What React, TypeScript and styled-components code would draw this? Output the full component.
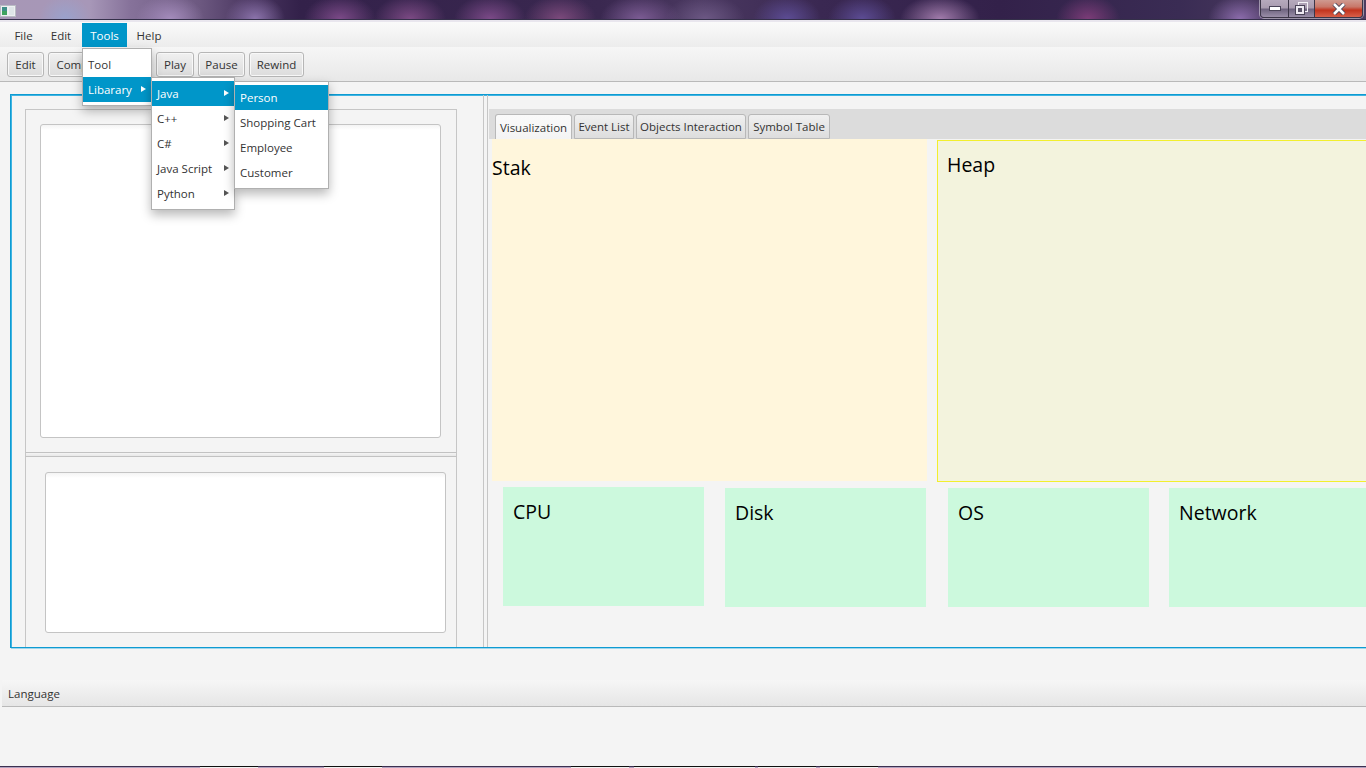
import { FC } from "react"
import styled, { createGlobalStyle } from "styled-components"

const GlobalStyle = createGlobalStyle`
	html, body {
		margin: 0;
		padding: 0;
		width: 1366px;
		height: 768px;
		overflow: hidden;
		background: #f4f4f4;
	}
	* {
		box-sizing: border-box;
	}
`

const menus = [
	{ label: "File", width: 33 },
	{ label: "Edit", width: 36 },
	{ label: "Tools", width: 45, active: true },
	{ label: "Help", width: 38 },
]

const tools = [
	{ label: "Edit", width: 37 },
	{ label: "Compile", width: 61 },
	{ label: "Run", width: 39 },
	{ label: "Play", width: 38 },
	{ label: "Pause", width: 47 },
	{ label: "Rewind", width: 55 },
]

const tabs = [
	{ label: "Visualization", width: 77, active: true },
	{ label: "Event List", width: 60 },
	{ label: "Objects Interaction", width: 110 },
	{ label: "Symbol Table", width: 82 },
]

const devices = [
	{ label: "CPU", raised: true },
	{ label: "Disk" },
	{ label: "OS" },
	{ label: "Network" },
]

// windows behind the app, they peek out under the bottom edge
const taskbar = [
	{ width: 200 },
	{ width: 58, light: true },
	{ width: 66 },
	{ width: 58, light: true },
	{ width: 189 },
	{ width: 58, light: true },
	{ width: 5 },
	{ width: 62, light: true },
	{ width: 59, light: true },
	{ width: 3 },
	{ width: 58, light: true },
	{ width: 4 },
	{ width: 58, light: true },
	{ width: 473 },
	{ width: 15 },
]

// blurred wallpaper spots seen through the glass title bar
const blobs = [
	[65, 26, "#9aa2cc"],
	[170, 34, "#a48cbc"],
	[255, 30, "#8c74ac"],
	[340, 36, "#7c4a88"],
	[410, 36, "#7c4a84"],
	[490, 36, "#7c4a88"],
	[560, 36, "#7c4a7c"],
	[640, 40, "#7c5c94"],
	[705, 40, "#6c5884"],
	[787, 34, "#5c4c94"],
	[862, 34, "#5c4c94"],
	[940, 40, "#a27cac"],
	[1088, 32, "#7c3c78"],
	[1240, 32, "#8c6cac"],
]

const blobLayers = blobs
	.map(([x, w, color]) => `radial-gradient(ellipse ${w}px 24px at ${x}px 19px, ${color}, transparent)`)
	.join(", ")

const App: FC = () => {
	return (
		<Page>
			<GlobalStyle />
			<TitleBar>
				<AppIcon viewBox="0 0 16 12">
					<rect x="0.5" y="0.5" width="15" height="11" fill="#eef0f2" stroke="#b9bcc4" />
					<rect x="2" y="2" width="5" height="8" fill="#3f8f88" />
					<rect x="2" y="6" width="5" height="4" fill="#3fa35e" />
					<rect x="9" y="2" width="5" height="8" fill="#dfe6e8" />
				</AppIcon>
				<WindowButtons>
					<WindowButton $width={28}>
						<svg width="12" height="5" viewBox="0 0 12 5">
							<rect x="0.5" y="0.5" width="11" height="4" fill="#fff" stroke="#4a4458" />
						</svg>
					</WindowButton>
					<WindowButton $width={26}>
						<svg width="13" height="13" viewBox="0 0 13 13">
							<rect x="3.5" y="0.5" width="9" height="9" fill="none" stroke="#f2f0f5" />
							<rect x="0.5" y="3.5" width="9" height="9" fill="#eeeaf2" stroke="#4a4458" />
							<rect x="3" y="6" width="4" height="4" fill="#5a5468" />
						</svg>
					</WindowButton>
					<CloseButton>
						<svg width="14" height="12" viewBox="0 0 14 12">
							<path d="M2 1 L12 11 M12 1 L2 11" stroke="#4a4458" strokeWidth="4.4" />
							<path d="M2 1 L12 11 M12 1 L2 11" stroke="#fff" strokeWidth="2.6" />
						</svg>
					</CloseButton>
				</WindowButtons>
			</TitleBar>

			<MenuBar>
				{menus.map(menu => (
					<MenuItem key={menu.label} $width={menu.width} $active={menu.active}>
						{menu.label}
					</MenuItem>
				))}
			</MenuBar>

			<ToolBar>
				{tools.map(tool => (
					<ToolButton key={tool.label} $width={tool.width}>
						{tool.label}
					</ToolButton>
				))}
			</ToolBar>

			<Main>
				<Frame>
					<LeftColumn>
						<UpperPanel>
							<CodeBox $height={314} />
						</UpperPanel>
						<PanelDivider />
						<LowerPanel>
							<CodeBox $height={161} />
						</LowerPanel>
					</LeftColumn>
					<SplitDivider />
					<RightColumn>
						<TabHeader>
							{tabs.map(tab => (
								<Tab key={tab.label} $width={tab.width} $active={tab.active}>
									{tab.label}
								</Tab>
							))}
						</TabHeader>
						<Memory>
							<Stack>Stak</Stack>
							<Heap>Heap</Heap>
						</Memory>
						<Devices>
							{devices.map(device => (
								<Device key={device.label} $raised={device.raised}>
									{device.label}
								</Device>
							))}
						</Devices>
					</RightColumn>
				</Frame>
			</Main>

			<LanguageHeader>Language</LanguageHeader>
			<LanguageBody />
			<Taskbar>
				{taskbar.map((part, i) => (
					<TaskbarPart key={i} $width={part.width} $light={part.light} />
				))}
			</Taskbar>

			<Popup $left={82} $top={48} $width={70}>
				<PopupRow>Tool</PopupRow>
				<PopupRow $active $arrow>
					Libarary
				</PopupRow>
			</Popup>
			<Popup $left={151} $top={77} $width={84}>
				<PopupRow $active $arrow>
					Java
				</PopupRow>
				<PopupRow $arrow>C++</PopupRow>
				<PopupRow $arrow>C#</PopupRow>
				<PopupRow $arrow>Java Script</PopupRow>
				<PopupRow $arrow>Python</PopupRow>
			</Popup>
			<Popup $left={234} $top={81} $width={95}>
				<PopupRow $active>Person</PopupRow>
				<PopupRow>Shopping Cart</PopupRow>
				<PopupRow>Employee</PopupRow>
				<PopupRow>Customer</PopupRow>
			</Popup>
		</Page>
	)
}
export default App

const Page = styled.div`
	position: relative;
	width: 1366px;
	height: 768px;
	overflow: hidden;
	display: flex;
	flex-direction: column;
	background: #f4f4f4;
	color: #333;
	font-family: "Open Sans", "Noto Sans", sans-serif;
	font-size: 11.5px;
`

const TitleBar = styled.div`
	flex: none;
	height: 22px;
	display: flex;
	align-items: flex-start;
	justify-content: space-between;
	border-bottom: 2px solid #e9e6ee;
	box-shadow: inset 0 -1px 0 #35304a;
	background: ${blobLayers},
		linear-gradient(90deg, #a797b6 0, #a797b8 90px, #86729a 130px, #6c5880 200px, #4a3660 250px, #33214a 300px, #3a2850 600px, #4a3860 700px, #3a2852 820px, #33214a 1000px, #3a2c54 1180px, #4d3c60 1300px);
`

const AppIcon = styled.svg`
	width: 16px;
	height: 12px;
	margin: 5px 0 0 0;
`

const WindowButtons = styled.div`
	display: flex;
	margin-right: 3px;
	height: 18px;
	border: 1px solid #3c3648;
	border-top: none;
	border-radius: 0 0 4px 4px;
	box-shadow: 0 0 0 1px rgba(255, 255, 255, 0.45);
	overflow: hidden;
`

const WindowButton = styled.div<{ $width: number }>`
	width: ${p => p.$width}px;
	display: flex;
	align-items: center;
	justify-content: center;
	border-right: 1px solid #3c3648;
	background: linear-gradient(180deg, #b6aabd 0, #a99cb0 45%, #6f6480 55%, #9a8ea8 100%);
`

const CloseButton = styled.div`
	width: 47px;
	display: flex;
	align-items: center;
	justify-content: center;
	background: linear-gradient(180deg, #cf9a90 0, #c8786a 40%, #c2341e 60%, #d8604a 100%);
`

const MenuBar = styled.div`
	flex: none;
	height: 25px;
	padding: 1px 0 0 7px;
	display: flex;
	gap: 3px;
	background: linear-gradient(180deg, #fafafa 0, #ececec 100%);
`

const MenuItem = styled.div<{ $width: number; $active?: boolean }>`
	width: ${p => p.$width}px;
	display: flex;
	align-items: center;
	justify-content: center;
	background: ${p => (p.$active ? "#0096c9" : "transparent")};
	color: ${p => (p.$active ? "#fff" : "#333")};
`

const ToolBar = styled.div`
	flex: none;
	height: 35px;
	padding: 5px 7px 0;
	display: flex;
	gap: 4px;
	align-items: flex-start;
	border-bottom: 1px solid #b9b9b9;
	background: linear-gradient(180deg, #f6f6f6 0, #e8e8e8 100%);
`

const ToolButton = styled.div<{ $width: number }>`
	width: ${p => p.$width}px;
	height: 25px;
	display: flex;
	align-items: center;
	justify-content: center;
	white-space: nowrap;
	border: 1px solid #b6b6b6;
	border-radius: 3px;
	box-shadow: inset 0 0 0 1px #f8f8f8;
	background: linear-gradient(180deg, #f0f0f0 0, #dcdcdc 100%);
`

const Main = styled.div`
	flex: none;
	height: 598px;
	padding: 12px 0 0 10px;
	background: #f4f4f4;
`

const Frame = styled.div`
	width: 1370px;
	height: 554px;
	display: flex;
	padding: 14px 0 0 14px;
	border: 1px solid #0e9bd2;
	box-shadow: 1px 1px 0 #9fd6ec, inset 1px 1px 0 #3fb4e2;
`

const LeftColumn = styled.div`
	flex: none;
	width: 432px;
	display: flex;
	flex-direction: column;
`

const UpperPanel = styled.div`
	flex: none;
	height: 343px;
	padding: 14px 0 0 14px;
	border: 1px solid #c6c6c6;
	border-bottom: none;
`

const PanelDivider = styled.div`
	flex: none;
	height: 5px;
	border-top: 1px solid #c2c2c2;
	border-bottom: 1px solid #c2c2c2;
	border-left: 1px solid #c6c6c6;
	border-right: 1px solid #c6c6c6;
	background: linear-gradient(180deg, #f4f4f4 0, #e8e8e8 100%);
`

const LowerPanel = styled.div`
	flex: 1;
	padding: 15px 0 0 19px;
	border-left: 1px solid #c6c6c6;
	border-right: 1px solid #c6c6c6;
`

const CodeBox = styled.div<{ $height: number }>`
	width: 401px;
	height: ${p => p.$height}px;
	border: 1px solid #c4c4c4;
	border-radius: 3px;
	background: linear-gradient(180deg, #f4f4f4 0, #ffffff 5px);
`

const SplitDivider = styled.div`
	flex: none;
	width: 5px;
	margin-left: 26px;
	margin-top: -14px;
	border-left: 1px solid #c6c6c6;
	border-right: 1px solid #c6c6c6;
`

const RightColumn = styled.div`
	flex: none;
	width: 880px;
	padding-left: 2px;
	display: flex;
	flex-direction: column;
`

const TabHeader = styled.div`
	flex: none;
	height: 30px;
	padding: 5px 0 0 6px;
	margin-left: -1px;
	display: flex;
	gap: 2px;
	background: #dcdcdc;
`

const Tab = styled.div<{ $width: number; $active?: boolean }>`
	width: ${p => p.$width}px;
	display: flex;
	align-items: center;
	justify-content: center;
	white-space: nowrap;
	border: 1px solid #b8b8b8;
	border-bottom: ${p => (p.$active ? "none" : "1px solid #b8b8b8")};
	border-radius: 3px 3px 0 0;
	background: ${p => (p.$active ? "linear-gradient(180deg, #fafafa 0, #f4f4f4 100%)" : "linear-gradient(180deg, #f0f0f0 0, #dddddd 100%)")};
`

const Memory = styled.div`
	flex: none;
	padding-left: 2px;
	display: grid;
	grid-template-columns: 435px 1fr;
	column-gap: 10px;
`

const MemoryLabel = styled.div`
	color: #000;
	font-size: 19.5px;
	line-height: 28px;
`

const Stack = styled(MemoryLabel)`
	height: 342px;
	padding: 15px 0 0 0;
	background: #fff6dc;
`

const Heap = styled(MemoryLabel)`
	height: 342px;
	margin-top: 1px;
	padding: 10px 0 0 9px;
	border: 1px solid #f2ef2e;
	border-right: none;
	background: #f3f3dd;
`

const Devices = styled.div`
	flex: none;
	margin-top: 6px;
	padding-left: 13px;
	display: grid;
	grid-template-columns: 222px 223px 221px 201px;
`

const Device = styled.div<{ $raised?: boolean }>`
	width: 201px;
	height: 119px;
	margin-top: ${p => (p.$raised ? "-1px" : "0")};
	padding: 11px 0 0 10px;
	background: #ccf9dd;
	color: #000;
	font-size: 19.5px;
	line-height: 28px;
`

const LanguageHeader = styled.div`
	flex: none;
	height: 27px;
	margin-left: 2px;
	padding-left: 6px;
	display: flex;
	align-items: center;
	border-bottom: 1px solid #b9b9b9;
	background: linear-gradient(180deg, #f6f6f6 0, #e6e6e6 100%);
`

const LanguageBody = styled.div`
	flex: 1;
`

const Taskbar = styled.div`
	flex: none;
	height: 2px;
	display: flex;
`

const TaskbarPart = styled.div<{ $width: number; $light?: boolean }>`
	width: ${p => p.$width}px;
	border-top: 1px solid ${p => (p.$light ? "#101010" : "#3c3050")};
	background: ${p => (p.$light ? "#f0f0f0" : "#b0a2be")};
`

const Popup = styled.div<{ $left: number; $top: number; $width: number }>`
	position: absolute;
	left: ${p => p.$left}px;
	top: ${p => p.$top}px;
	width: ${p => p.$width}px;
	padding: 3px 0 3px;
	border: 1px solid #b0b0b0;
	background: #fff;
	box-shadow: 0 5px 10px rgba(0, 0, 0, 0.28);
`

const PopupRow = styled.div<{ $active?: boolean; $arrow?: boolean }>`
	position: relative;
	height: 25px;
	padding-left: 5px;
	display: flex;
	align-items: center;
	white-space: nowrap;
	background: ${p => (p.$active ? "#0096c9" : "transparent")};
	color: ${p => (p.$active ? "#fff" : "#333")};

	&::after {
		content: "";
		display: ${p => (p.$arrow ? "block" : "none")};
		position: absolute;
		right: 5px;
		top: 9px;
		border-left: 5px solid ${p => (p.$active ? "#fff" : "#555")};
		border-top: 3.5px solid transparent;
		border-bottom: 3.5px solid transparent;
	}
`
